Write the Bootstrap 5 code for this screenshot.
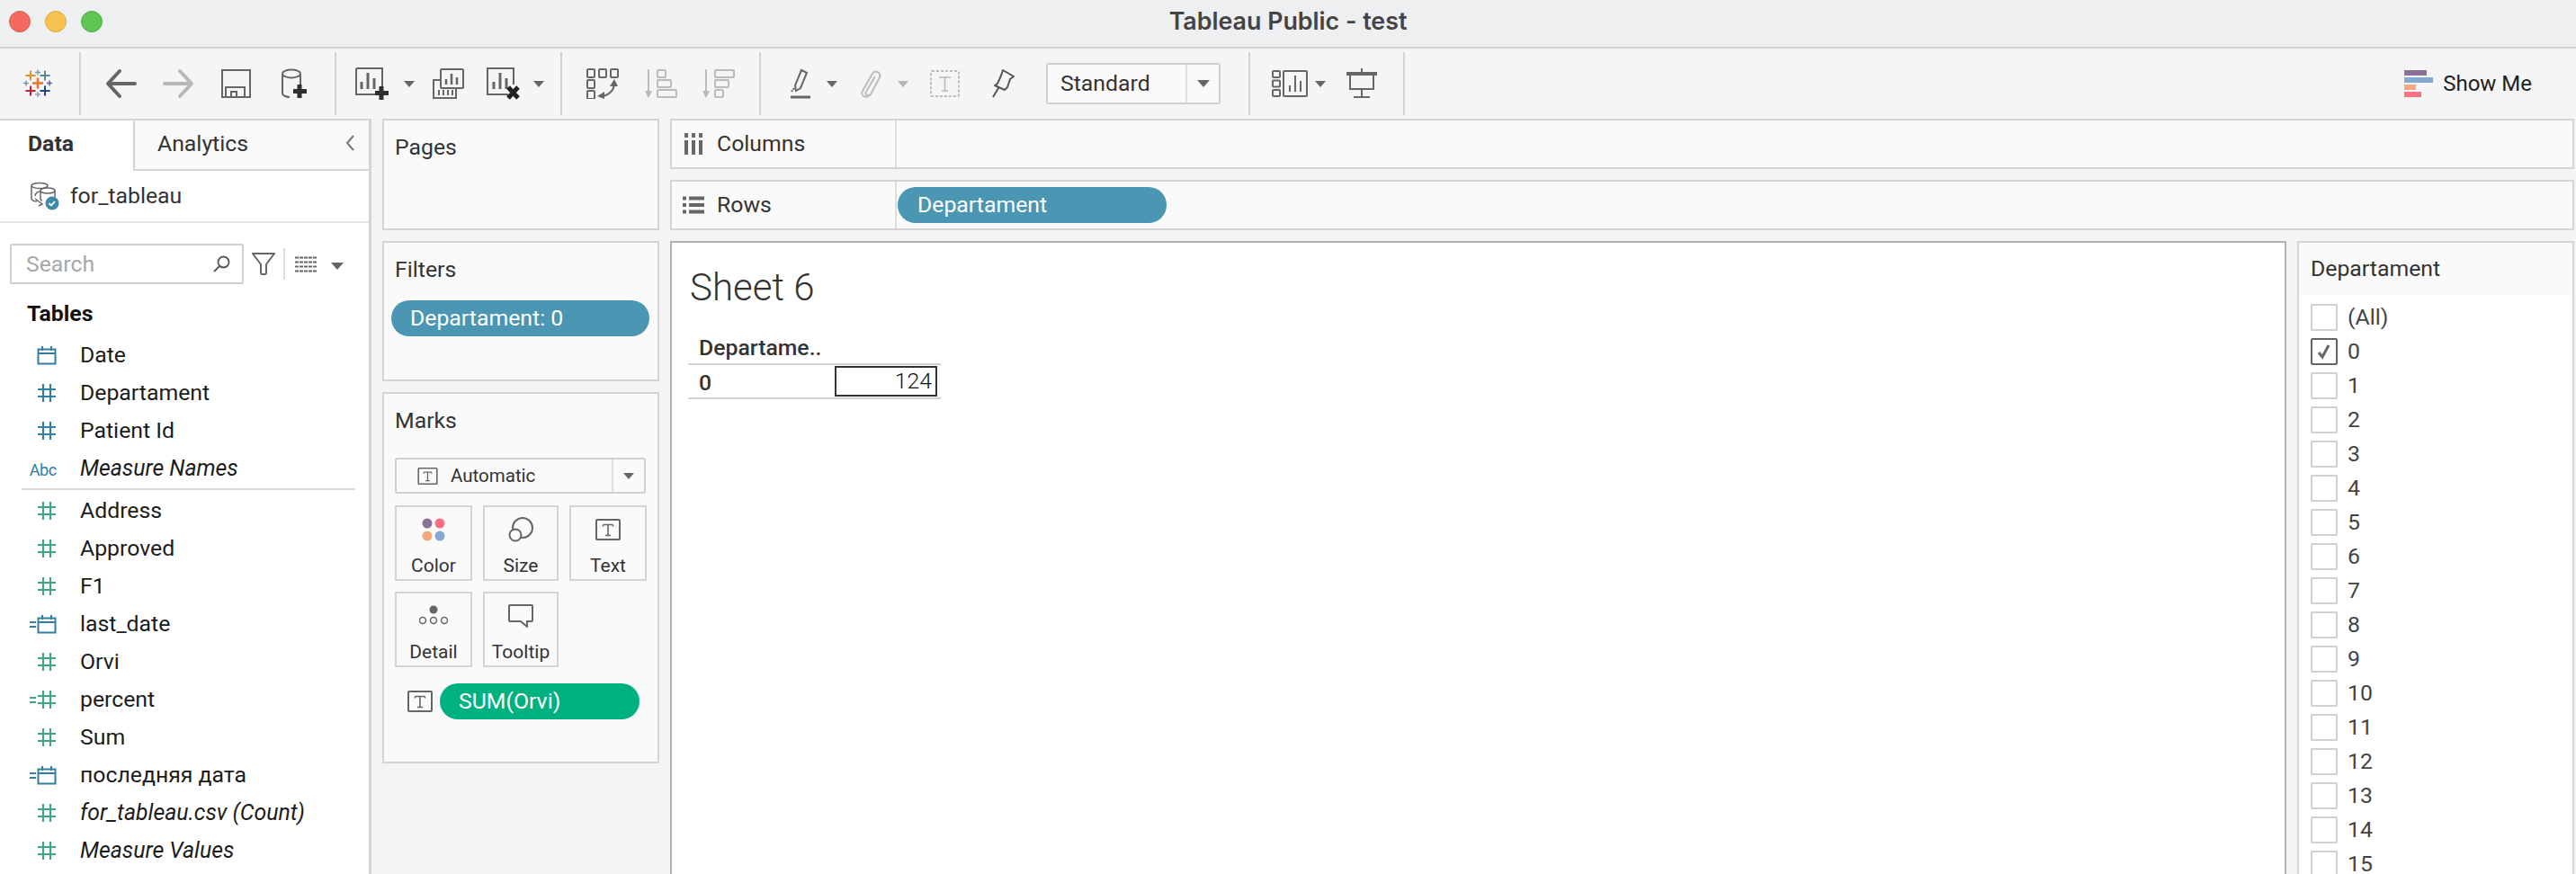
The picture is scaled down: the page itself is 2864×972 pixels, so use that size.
<!DOCTYPE html>
<html lang="en">
<head>
<meta charset="utf-8">
<title>Tableau Public - test</title>
<link rel="stylesheet" href="https://cdn.jsdelivr.net/npm/bootstrap@5.3.0/dist/css/bootstrap.min.css">
<style>
html,body{height:972px;overflow:hidden}
body{background:#f4f4f4;font-family:Roboto,"Liberation Sans",sans-serif;font-size:24.8px;color:#333;line-height:1.2}
.titlebar{height:54px;background:#eeeff0;border-bottom:2px solid #d2d2d2;position:relative}
.lights{position:absolute;left:10px;top:12px;gap:16px}
.lights i{display:block;width:24px;height:24px;border-radius:50%}
.l-r{background:#f2695f;border:1px solid #de5a50}.l-y{background:#f7c04f;border:1px solid #e2a93c}.l-g{background:#5fc653;border:1px solid #52ad46}
.apptitle{font-family:Inter,Roboto,sans-serif;font-weight:600;font-size:26.800px;color:#444;line-height:47px}
.toolbar{height:78px;display:grid;padding-left:25px;align-items:center;justify-items:start;background:#f5f5f5;
grid-template-columns:63px 29px 64px 65px 66px 60px 23px 54px 32px 60px 52px 30px 29px 65px 64px 63px 35px 40px 37px 42px 36px 67px 62px 225px 26px 48px 35px 63px 1fr auto}
.tsep{width:2px;height:70px;background:#d2d2d2}
.tcaret{display:block;width:0;height:0;border-left:6px solid transparent;border-right:6px solid transparent;border-top:7px solid #666}
.tcaret.dim{border-top-color:#b5b5b5}
.tcaret.wide{border-left-width:7px;border-right-width:7px;border-top-width:8px}
.stdsel{width:194px;height:46px;border:2px solid #cfcfcf;border-radius:3px;background:#fafafa}
.stdsel span.lbl{padding-left:14px;flex:1}
.stdsel .end{width:37px;border-left:2px solid #e2e2e2;height:100%}
.showme{padding-right:49px;color:#222;gap:11px;font-size:24px}
.workarea{height:860px;gap:12px;padding-right:2px}
.datapane{width:413px;flex:none;background:#fff;border-top:2px solid #d4d4d4;border-right:3px solid #d4d4d4}
.paneltabs{height:55px;flex-wrap:nowrap}
.paneltabs .tab-a{width:148px;padding:11px 0 0 31px;font-weight:700;color:#333;background:#fff}
.paneltabs .tab-b{flex:1;background:#f9f9f9;border-left:2px solid #d4d4d4;border-bottom:2px solid #d4d4d4;padding:11px 15px 0 25px;color:#333;height:56px}
.dsrow{height:59px;padding-left:33px;gap:12px;border-bottom:2px solid #e4e4e4;color:#333}
.searchrow{padding:22px 0 0 11px;height:69px}
.searchbox{width:260px;height:45px;border:2px solid #cfcfcf;border-radius:2px;padding:0 13px 0 16px;color:#a8a8a8;margin-right:9px}
.vsep{width:2px;height:35px;background:#ddd;margin:0 11px 0 9px}
.tablehead{font-weight:700;color:#111;padding:17px 0 0 30px;height:47px}
.fieldlist{--bs-list-group-bg:transparent;--bs-list-group-border-width:0;--bs-list-group-color:#1c1c1c;--bs-list-group-item-padding-x:0;--bs-list-group-item-padding-y:0;padding-top:10px}
.fieldrow{height:42px;display:flex;align-items:center;line-height:1}
.ficon{width:89px;flex:none;padding-left:33px;display:flex;align-items:center;justify-content:flex-end;padding-right:26px}
.ficon.abc{font-size:18px;padding-right:26px;color:#2f7ea3;letter-spacing:-.3px;padding-top:4px}
.c-blue{color:#337fa3}.c-green{color:#41a67d}
.eqmark{width:7px;height:7px;border-top:2px solid;border-bottom:2px solid;margin-right:1px}
.fielddiv{height:2px;background:#d8d8d8;margin:1px 15px 2px 24px}
.midcol{width:308px;flex:none;gap:12px}
.shelfcard{--bs-card-border-width:2px;--bs-card-border-color:#d4d4d4;--bs-card-border-radius:0;--bs-card-inner-border-radius:0;--bs-card-bg:#fafafa;--bs-card-color:#333}
.shelftitle{padding:17px 0 0 12px;line-height:26px}
.h-pages{height:124px}.h-filters{height:156px}.h-marks{height:413px}
.pillx{display:flex;align-items:center;height:40px;border-radius:20px;color:#fff;font-weight:400;padding:0 0 0 21px;flex:none}
.pill-blue{background:#4a96b3}.pill-green{background:#00b180}
.filterpill{width:287px;margin:21px 0 0 8px}
.rowpill{width:299px;margin-left:1px;padding-left:22px}
.marksel{width:279px;height:40px;margin:28px 0 0 12px;border:2px solid #d0d0d0;border-radius:3px;font-size:20.500px;background:#fafafa}
.marksel .lft{flex:1;padding-left:23px;gap:14px}
.marksel .end{width:36px;border-left:2px solid #e0e0e0;height:100%}
.markgrid{display:grid;grid-template-columns:86px 84px 86px;gap:12px;margin:13px 0 0 12px}
.btn.markbtn{--bs-btn-border-radius:0;--bs-btn-border-width:2px;--bs-btn-border-color:#d4d4d4;--bs-btn-padding-x:0;--bs-btn-padding-y:0;--bs-btn-font-size:21px;--bs-btn-color:#333;--bs-btn-bg:transparent;height:84px;display:flex;flex-direction:column;align-items:center;line-height:1}
.markbtn .ic{height:55px;display:flex;align-items:center;padding-bottom:6px}
.marktext{margin:18px 0 0 26px;gap:8px}
.marktext .pillx{width:222px}
.toprow{height:56px;flex:none;background:#fafafa;border:2px solid #d4d4d4}
.toplabel{width:250px;flex:none;height:100%;padding-left:14px;border-right:2px solid #dedede;gap:16px}
.rowico{margin:0 -2px}
.sheetwrap{gap:12px;flex:1;min-width:0}
.sheetbody{flex:1;gap:12px;min-height:0}
.vizframe{flex:1;background:#fff;border:2px solid #b2b2b2;padding:0 0 0 18px}
.vizname{font-weight:300;font-size:42px;line-height:42px;color:#333;padding:29px 0 0 2px;height:94px}
.vizhead{width:160px;height:42px;border-bottom:2px solid #d0d0d0;padding:9px 0 0 12px;font-weight:500;color:#333;line-height:28px}
.vizcell{width:160px;height:38px;border-bottom:2px solid #d0d0d0;padding:5px 0 0 12px;font-weight:500;line-height:30px}
.vizwrap{width:121px;height:40px;border-top:2px solid #d0d0d0;border-bottom:2px solid #d0d0d0;margin-top:-2px;padding:1px 0 0 3px}
.vizbox{width:114px;height:34px;border:2px solid #333;text-align:right;padding-right:4px;line-height:30px;font-weight:300;color:#111}
.qfilter{width:308px;flex:none;background:#fff;border:2px solid #d4d4d4}
.qhead{height:58px;background:#fafafa;padding-left:13px;line-height:58px;color:#333}
.qlist{padding:6px 0 0 13px}
.qrow{height:38px;gap:11px;color:#444}
.cbx{width:30px;height:30px;border:2px solid #d0d0d0;border-radius:2px;background:#fff;flex:none;display:flex;align-items:center;justify-content:center}
.cbx.on{border-color:#666}
</style>
</head>
<body>
<svg width="0" height="0" class="position-absolute">
<defs>
<symbol id="hash" viewBox="0 0 22 22"><path d="M7 1v20M15 1v20M1 7h20M1 15h20" fill="none" stroke="currentColor" stroke-width="2.200"/></symbol>
<symbol id="cal" viewBox="0 0 22 22"><path d="M1.500 4.500h19v16h-19zM1.500 9h19M6 1v5M16 1v5" fill="none" stroke="currentColor" stroke-width="2"/></symbol>
<symbol id="tbox" viewBox="0 0 28 24"><rect x="1" y="1" width="26" height="22" rx="1" fill="none" stroke="#666" stroke-width="2"/><path d="M8.500 6.500h11M14 6.500v12M11 18.500h6M8.500 6.500v2M19.500 6.500v2" fill="none" stroke="#666" stroke-width="1.600"/></symbol>
</defs>
</svg>

<div class="titlebar text-center">
  <div class="lights d-flex"><i class="l-r"></i><i class="l-y"></i><i class="l-g"></i></div>
  <div class="apptitle">Tableau Public - test</div>
</div>

<div class="toolbar">
  <svg width="36" height="32" viewBox="0 0 36 32"><g fill="none" stroke-width="2.600"><path d="M17 9.500v12M11 15.500h12" stroke="#e8762c"/><path d="M9 1.500v11M3.500 7h11" stroke="#e8902c" stroke-width="2"/><path d="M25 1.500v11M19.500 7h11" stroke="#5b879b" stroke-width="2"/><path d="M17 .5v6M14 3.500h6" stroke="#7b9db0" stroke-width="1.500"/><path d="M4 12.500v6M1 15.500h6" stroke="#7199a8" stroke-width="1.500"/><path d="M30 12.500v6M27 15.500h6" stroke="#59639a" stroke-width="1.500"/><path d="M9 18.500v11M3.500 24h11" stroke="#c72035" stroke-width="2"/><path d="M25 18.500v11M19.500 24h11" stroke="#1f447e" stroke-width="2"/><path d="M17 25v6M14 28h6" stroke="#8aa0c0" stroke-width="1.500"/></g></svg>
  <div class="tsep"></div>
  <svg width="35" height="34" viewBox="0 0 35 34"><path d="M33 17H4M16 3 3 17l13 14" fill="none" stroke="#666" stroke-width="4" stroke-linecap="round" stroke-linejoin="round"/></svg>
  <svg width="35" height="34" viewBox="0 0 35 34"><path d="M2 17h29M19 3l13 14-13 14" fill="none" stroke="#b8b8b8" stroke-width="4" stroke-linecap="round" stroke-linejoin="round"/></svg>
  <svg width="33" height="32" viewBox="0 0 33 32"><path d="M1 1h31v30H1zM5 31V20h21v11M11 31v-6h6v6" fill="none" stroke="#666" stroke-width="2"/></svg>
  <svg width="30" height="34" viewBox="0 0 30 34"><ellipse cx="12" cy="6" rx="10" ry="4.500" fill="none" stroke="#666" stroke-width="2"/><path d="M2 6v22c0 2 4 4 8 4M22 6v13" fill="none" stroke="#666" stroke-width="2"/><path d="M21 18v15M14 25.500h15" stroke="#2f2f2f" stroke-width="5"/></svg>
  <div class="tsep"></div>
  <svg width="38" height="36" viewBox="0 0 38 36"><path d="M1 1h29v29H1" fill="none" stroke="#666" stroke-width="2"/><path d="M1 1v29h17" fill="none" stroke="#666" stroke-width="2"/><path d="M7 24v-8M14 24V6M21 24V12" stroke="#666" stroke-width="3"/><path d="M30 1v17" stroke="#666" stroke-width="2"/><path d="M29 21v15M22 28.500h15" stroke="#2f2f2f" stroke-width="5"/></svg>
  <span class="tcaret"></span>
  <svg width="35" height="34" viewBox="0 0 35 34"><rect x="9" y="1" width="25" height="21" rx="1" fill="#f5f5f5" stroke="#666" stroke-width="2"/><path d="M15 18v-6M21 18V6M27 18v-8" stroke="#666" stroke-width="2.500"/><path d="M9 13H1v20h25v-11" fill="none" stroke="#666" stroke-width="2"/><path d="M7 30v-6M12 30v-6M17 30v-6M22 30v-6" stroke="#666" stroke-width="2"/></svg>
  <svg width="38" height="36" viewBox="0 0 38 36"><path d="M24 30H1V1h29v18" fill="none" stroke="#666" stroke-width="2"/><path d="M8 24v-8M15 24V6M22 24V12" stroke="#666" stroke-width="3"/><path d="M24 22l11 12M35 22 24 34" stroke="#222" stroke-width="5"/></svg>
  <span class="tcaret"></span>
  <div class="tsep"></div>
  <svg width="36" height="34" viewBox="0 0 36 34"><g fill="none" stroke="#666" stroke-width="2"><rect x="1" y="1" width="8" height="9" rx="1"/><rect x="14" y="1" width="8" height="9" rx="1"/><rect x="27" y="1" width="8" height="9" rx="1"/><rect x="1" y="13" width="8" height="9" rx="1"/><rect x="1" y="25" width="8" height="9" rx="1"/></g><path d="M31 16c0 8-5 13-13 15" fill="none" stroke="#666" stroke-width="2"/><path d="M26 20l5-8 4 8zM20 26l-8 5 8 3z" fill="#666"/></svg>
  <svg width="36" height="34" viewBox="0 0 36 34"><path d="M4 1v26" stroke="#bbb" stroke-width="2"/><path d="M0 25h8l-4 8z" fill="#bbb"/><g fill="none" stroke="#bbb" stroke-width="2"><rect x="14" y="2" width="9" height="8" rx="1"/><rect x="14" y="13" width="15" height="8" rx="1"/><rect x="14" y="24" width="21" height="8" rx="1"/></g></svg>
  <svg width="36" height="34" viewBox="0 0 36 34"><path d="M4 1v26" stroke="#bbb" stroke-width="2"/><path d="M0 25h8l-4 8z" fill="#bbb"/><g fill="none" stroke="#bbb" stroke-width="2"><rect x="14" y="2" width="21" height="8" rx="1"/><rect x="14" y="13" width="15" height="8" rx="1"/><rect x="14" y="24" width="9" height="8" rx="1"/></g></svg>
  <div class="tsep"></div>
  <svg width="22" height="34" viewBox="0 0 22 34"><path d="M12 2l6 3-7 17-5 3-1-6z" fill="none" stroke="#666" stroke-width="2"/><path d="M1 26l3-4" stroke="#666" stroke-width="2" stroke-dasharray="2 1"/><path d="M0 32h22" stroke="#666" stroke-width="3"/></svg>
  <span class="tcaret"></span>
  <svg width="24" height="32" viewBox="0 0 24 32"><path d="M17 8 7 25c-2 3 3 6 5 3L22 9c2-5-5-9-8-4L3 24c-3 6 5 9 8 4" fill="none" stroke="#bdbdbd" stroke-width="2"/></svg>
  <span class="tcaret dim"></span>
  <svg width="33" height="30" viewBox="0 0 33 30"><rect x="1" y="1" width="31" height="28" rx="1" fill="none" stroke="#bbb" stroke-width="2" stroke-dasharray="3 2"/><path d="M10 8h13M16.500 8v15M13 23h7" fill="none" stroke="#bbb" stroke-width="1.600"/></svg>
  <svg width="27" height="32" viewBox="0 0 27 32"><path d="M14 1l12 7-4 3-3 9-3 3L5 18l3-2 4-9zM9 21 3 31" fill="none" stroke="#555" stroke-width="2" stroke-linejoin="round"/></svg>
  <div class="stdsel d-flex align-items-center"><span class="lbl">Standard</span><span class="end d-flex align-items-center justify-content-center"><span class="tcaret wide"></span></span></div>
  <div class="tsep"></div>
  <svg width="40" height="30" viewBox="0 0 40 30"><g fill="none" stroke="#666" stroke-width="2"><rect x="1" y="1" width="8" height="7" rx="1"/><rect x="1" y="11.500" width="8" height="7" rx="1"/><rect x="1" y="22" width="8" height="7" rx="1"/><rect x="13" y="1" width="26" height="28" rx="1"/></g><path d="M20 24v-7M26 24V6M32 24V12" stroke="#666" stroke-width="2"/></svg>
  <span class="tcaret"></span>
  <svg width="34" height="34" viewBox="0 0 34 34"><path d="M0 6h34" stroke="#666" stroke-width="4"/><path d="M17 0v4M4 8v15h26V8M17 23v9M8 32h18" fill="none" stroke="#666" stroke-width="2"/></svg>
  <div class="tsep"></div>
  <div class="showme d-flex align-items-center">
    <svg width="32" height="30" viewBox="0 0 32 30"><rect width="25" height="6" fill="#8a7196"/><rect y="8" width="32" height="6" fill="#85a8cd"/><rect y="16" width="13" height="6" fill="#f4a87e"/><rect y="24" width="19" height="6" fill="#fb7081"/></svg>
    <span>Show Me</span>
  </div>
</div>

<div class="workarea d-flex">
  <div class="datapane d-flex flex-column">
    <div class="nav paneltabs d-flex">
      <a class="nav-link tab-a">Data</a>
      <a class="nav-link tab-b d-flex justify-content-between"><span>Analytics</span><svg width="12" height="20" viewBox="0 0 12 20" class="mt-1"><path d="M10 2 3 10l7 8" fill="none" stroke="#777" stroke-width="2"/></svg></a>
    </div>
    <div class="dsrow d-flex align-items-center">
      <svg width="33" height="32" viewBox="0 0 33 32"><g fill="none" stroke="#666" stroke-width="1.500"><ellipse cx="11" cy="4.500" rx="9" ry="3"/><path d="M2 4.500V19c0 1.500 3 3 6 3M11 11c-2 0-5 2-5 5"/><ellipse cx="20" cy="10" rx="8" ry="3"/><path d="M12 10v9c0 1 1 2 2 2M28 10v7M6 19l4 3 4 3-4 2"/></g><circle cx="25" cy="24" r="7.500" fill="#3d8bab"/><path d="M21.500 24l2.500 2.500 4-4.500" fill="none" stroke="#fff" stroke-width="1.800"/></svg>
      <span>for_tableau</span>
    </div>
    <div class="searchrow d-flex align-items-center">
      <div class="searchbox d-flex align-items-center justify-content-between"><span>Search</span>
        <svg width="19" height="19" viewBox="0 0 19 19"><circle cx="11.500" cy="7.500" r="6" fill="none" stroke="#555" stroke-width="1.800"/><path d="M7 12 1 18" stroke="#555" stroke-width="1.800"/></svg></div>
      <svg width="26" height="25" viewBox="0 0 26 25"><path d="M1 1h24l-9 12v10c0 1.500-6 1.500-6 0V13z" fill="none" stroke="#666" stroke-width="2"/></svg>
      <div class="vsep"></div>
      <svg width="24" height="18" viewBox="0 0 24 18"><path d="M0 1.500h24M0 6.500h24M0 11.500h24M0 16.500h24" stroke="#666" stroke-width="2" stroke-dasharray="4 1"/></svg>
      <span class="tcaret wide ms-3 mt-1"></span>
    </div>
    <div class="tablehead">Tables</div>
    <div class="list-group fieldlist">
      <div class="list-group-item fieldrow"><span class="ficon c-blue"><svg width="22" height="22"><use href="#cal"/></svg></span>Date</div>
      <div class="list-group-item fieldrow"><span class="ficon c-blue"><svg width="22" height="22"><use href="#hash"/></svg></span>Departament</div>
      <div class="list-group-item fieldrow"><span class="ficon c-blue"><svg width="22" height="22"><use href="#hash"/></svg></span>Patient Id</div>
      <div class="list-group-item fieldrow"><span class="ficon abc">Abc</span><em>Measure Names</em></div>
      <div class="fielddiv"></div>
      <div class="list-group-item fieldrow"><span class="ficon c-green"><svg width="22" height="22"><use href="#hash"/></svg></span>Address</div>
      <div class="list-group-item fieldrow"><span class="ficon c-green"><svg width="22" height="22"><use href="#hash"/></svg></span>Approved</div>
      <div class="list-group-item fieldrow"><span class="ficon c-green"><svg width="22" height="22"><use href="#hash"/></svg></span>F1</div>
      <div class="list-group-item fieldrow"><span class="ficon c-blue"><i class="eqmark"></i><svg width="22" height="22"><use href="#cal"/></svg></span>last_date</div>
      <div class="list-group-item fieldrow"><span class="ficon c-green"><svg width="22" height="22"><use href="#hash"/></svg></span>Orvi</div>
      <div class="list-group-item fieldrow"><span class="ficon c-green"><i class="eqmark"></i><svg width="22" height="22"><use href="#hash"/></svg></span>percent</div>
      <div class="list-group-item fieldrow"><span class="ficon c-green"><svg width="22" height="22"><use href="#hash"/></svg></span>Sum</div>
      <div class="list-group-item fieldrow"><span class="ficon c-blue"><i class="eqmark"></i><svg width="22" height="22"><use href="#cal"/></svg></span>последняя дата</div>
      <div class="list-group-item fieldrow"><span class="ficon c-green"><svg width="22" height="22"><use href="#hash"/></svg></span><em>for_tableau.csv (Count)</em></div>
      <div class="list-group-item fieldrow"><span class="ficon c-green"><svg width="22" height="22"><use href="#hash"/></svg></span><em>Measure Values</em></div>
    </div>
  </div>

  <div class="midcol d-flex flex-column">
    <div class="card shelfcard h-pages"><div class="shelftitle">Pages</div></div>
    <div class="card shelfcard h-filters"><div class="shelftitle">Filters</div><div class="pillx pill-blue filterpill">Departament: 0</div></div>
    <div class="card shelfcard h-marks">
      <div class="shelftitle">Marks</div>
      <div class="marksel d-flex align-items-center">
        <span class="lft d-flex align-items-center"><svg width="23" height="19"><use href="#tbox"/></svg>Automatic</span>
        <span class="end d-flex align-items-center justify-content-center"><span class="tcaret"></span></span>
      </div>
      <div class="markgrid">
        <button class="btn markbtn"><span class="ic"><svg width="26" height="26" viewBox="0 0 26 26"><circle cx="6" cy="6" r="5.500" fill="#8a7196"/><circle cx="20" cy="6" r="5.500" fill="#fb7081"/><circle cx="6" cy="20" r="5.500" fill="#f4a87e"/><circle cx="20" cy="20" r="5.500" fill="#85a8cd"/></svg></span>Color</button>
        <button class="btn markbtn"><span class="ic"><svg width="28" height="28" viewBox="0 0 28 28"><circle cx="16" cy="12" r="11" fill="none" stroke="#666" stroke-width="2"/><circle cx="8" cy="20" r="6.500" fill="#fafafa" stroke="#666" stroke-width="2"/></svg></span>Size</button>
        <button class="btn markbtn"><span class="ic"><svg width="28" height="24"><use href="#tbox"/></svg></span>Text</button>
        <button class="btn markbtn"><span class="ic"><svg width="32" height="24" viewBox="0 0 32 24"><circle cx="16" cy="5" r="4.500" fill="#666"/><g fill="none" stroke="#666" stroke-width="1.500"><circle cx="4" cy="17" r="3.500"/><circle cx="16" cy="17" r="3.500"/><circle cx="28" cy="17" r="3.500"/></g></svg></span>Detail</button>
        <button class="btn markbtn"><span class="ic"><svg width="28" height="26" viewBox="0 0 28 26"><path d="M2 1h24a1 1 0 0 1 1 1v16a1 1 0 0 1-1 1h-5v6l-7-6H2a1 1 0 0 1-1-1V2a1 1 0 0 1 1-1z" fill="none" stroke="#666" stroke-width="2"/></svg></span>Tooltip</button>
      </div>
      <div class="marktext d-flex align-items-center"><svg width="28" height="24"><use href="#tbox"/></svg><div class="pillx pill-green">SUM(Orvi)</div></div>
    </div>
  </div>

  <div class="d-flex flex-column sheetwrap">
    <div class="toprow d-flex align-items-center">
      <div class="toplabel d-flex align-items-center"><svg width="20" height="24" viewBox="0 0 20 24"><path d="M2 8v16M10 8v16M18 8v16" stroke="#666" stroke-width="4"/><path d="M2 0v5M10 0v5M18 0v5" stroke="#666" stroke-width="4"/></svg><span>Columns</span></div>
    </div>
    <div class="toprow d-flex align-items-center">
      <div class="toplabel d-flex align-items-center"><svg class="rowico" width="24" height="20" viewBox="0 0 24 20"><path d="M0 2.500h4M7 2.500h17M0 10h4M7 10h17M0 17.500h4M7 17.500h17" stroke="#666" stroke-width="4"/></svg><span>Rows</span></div>
      <div class="pillx pill-blue rowpill">Departament</div>
    </div>
    <div class="d-flex sheetbody">
      <div class="vizframe">
        <div class="vizname">Sheet 6</div>
        <div class="vizhead">Departame..</div>
        <div class="d-flex">
          <div class="vizcell">0</div>
          <div class="vizwrap"><div class="vizbox">124</div></div>
        </div>
      </div>
      <div class="qfilter">
        <div class="qhead">Departament</div>
        <div class="qlist">
          <div class="qrow d-flex align-items-center"><span class="cbx"></span>(All)</div>
          <div class="qrow d-flex align-items-center"><span class="cbx on"><svg width="18" height="18" viewBox="0 0 18 18"><path d="M3 10l4 5L14 2" fill="none" stroke="#666" stroke-width="3"/></svg></span>0</div>
          <div class="qrow d-flex align-items-center"><span class="cbx"></span>1</div>
          <div class="qrow d-flex align-items-center"><span class="cbx"></span>2</div>
          <div class="qrow d-flex align-items-center"><span class="cbx"></span>3</div>
          <div class="qrow d-flex align-items-center"><span class="cbx"></span>4</div>
          <div class="qrow d-flex align-items-center"><span class="cbx"></span>5</div>
          <div class="qrow d-flex align-items-center"><span class="cbx"></span>6</div>
          <div class="qrow d-flex align-items-center"><span class="cbx"></span>7</div>
          <div class="qrow d-flex align-items-center"><span class="cbx"></span>8</div>
          <div class="qrow d-flex align-items-center"><span class="cbx"></span>9</div>
          <div class="qrow d-flex align-items-center"><span class="cbx"></span>10</div>
          <div class="qrow d-flex align-items-center"><span class="cbx"></span>11</div>
          <div class="qrow d-flex align-items-center"><span class="cbx"></span>12</div>
          <div class="qrow d-flex align-items-center"><span class="cbx"></span>13</div>
          <div class="qrow d-flex align-items-center"><span class="cbx"></span>14</div>
          <div class="qrow d-flex align-items-center"><span class="cbx"></span>15</div>
        </div>
      </div>
    </div>
  </div>
</div>
<script src="https://cdn.jsdelivr.net/npm/bootstrap@5.3.0/dist/js/bootstrap.bundle.min.js"></script>
</body>
</html>
